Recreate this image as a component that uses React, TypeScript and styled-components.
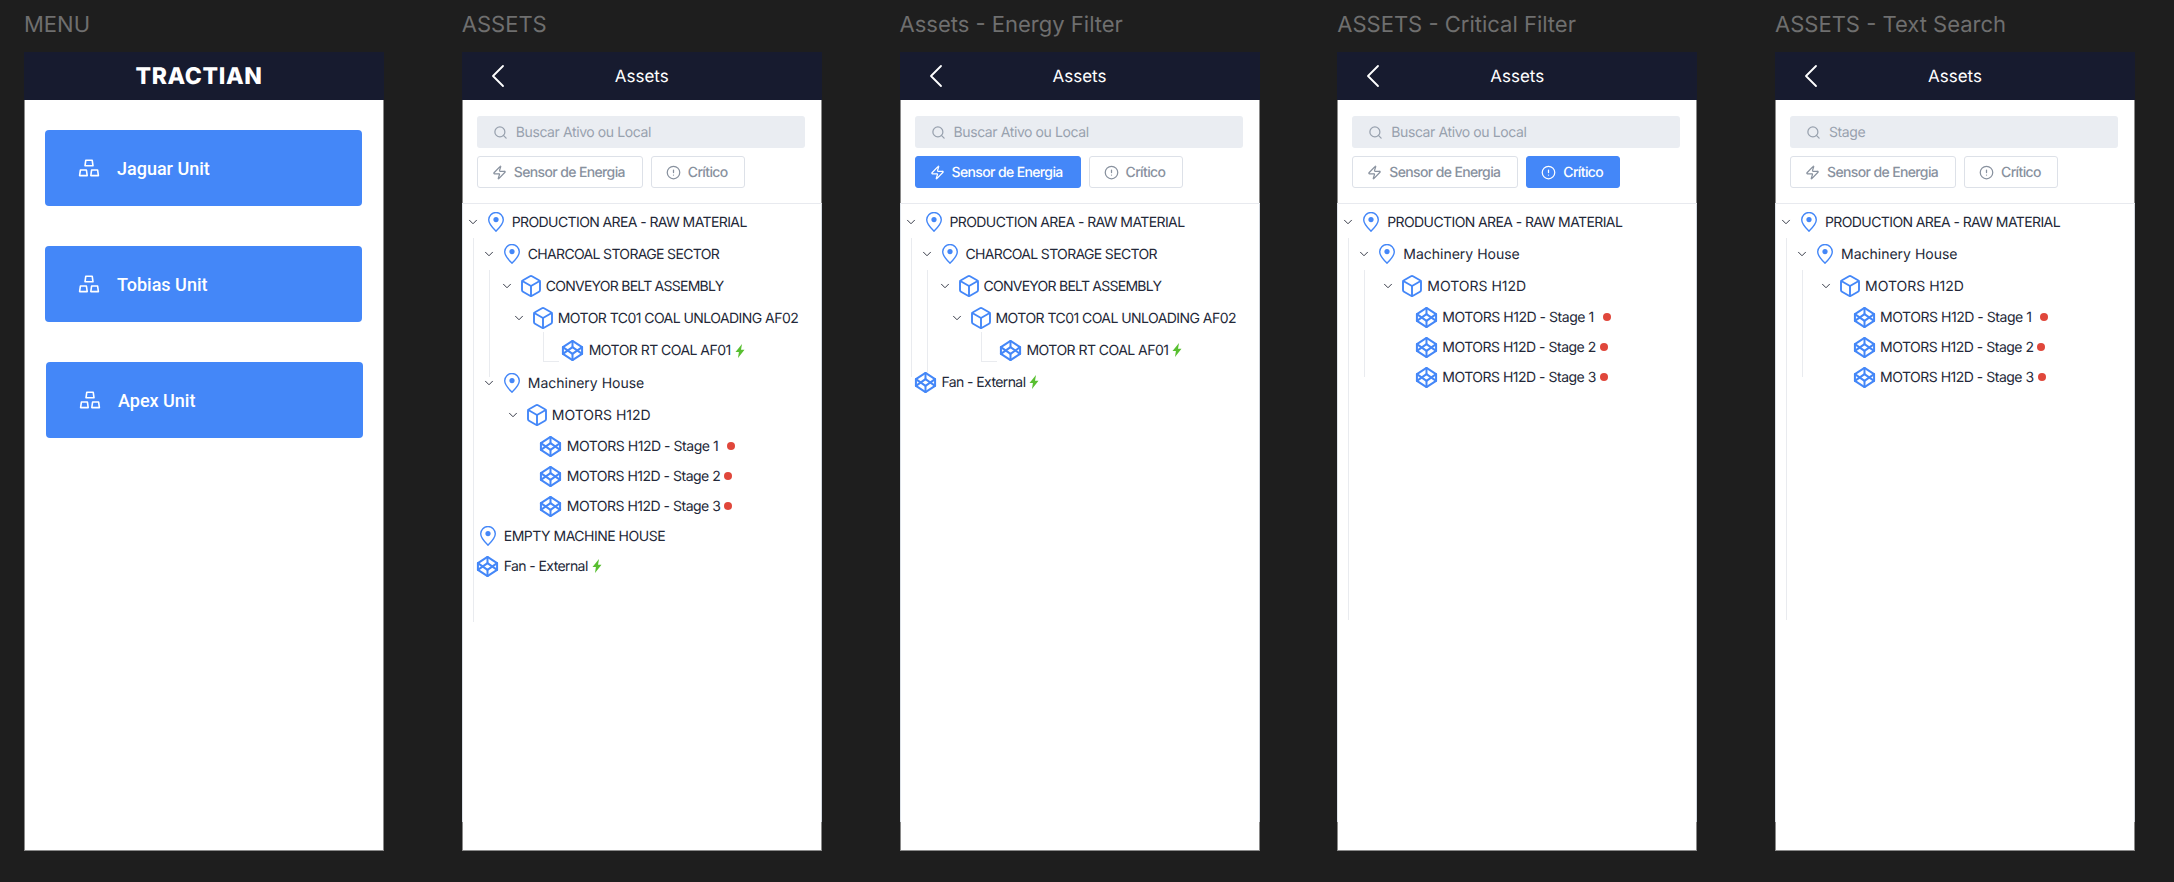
import styled, { createGlobalStyle } from 'styled-components';
import { Box, ChevronDown, ChevronLeft, CircleAlert, Codepen, Search, Zap } from 'lucide-react';

const GlobalStyle = createGlobalStyle`
    html,
    body {
        margin: 0;
        background: #1e1e1e;
        font-family: Inter, 'Liberation Sans', sans-serif;
        text-rendering: geometricPrecision;
    }
`;

const Page = styled.div`
    display: flex;
    gap: 77.75px;
    width: 2174px;
    height: 882px;
    padding: 11px 0 0 24px;
    box-sizing: border-box;
    overflow: hidden;
`;

const Column = styled.section`
    width: 360px;
`;

const Caption = styled.div`
    height: 41px;
    font-size: 22px;
    line-height: 28px;
    color: #6f6f6f;
    white-space: nowrap;
`;

const Phone = styled.div`
    display: flex;
    flex-direction: column;
    height: 799px;
    background: #fff;
    box-shadow: inset 0 0 0 1px #8a8a8a;
`;

const Header = styled.header`
    display: grid;
    grid-template-columns: 1fr auto 1fr;
    align-items: center;
    height: 48px;
    flex: none;
    background: #171b2f;
    color: #fff;
`;

const BackButton = styled.span`
    display: flex;
    padding-left: 16px;
`;

const Title = styled.span`
    padding-top: 1px;
    font-size: 17px;
`;

const Logo = styled.span`
    grid-column: 2;
    margin-left: -10px;
    font-size: 23px;
    font-weight: 800;
    letter-spacing: 0.6px;
    line-height: 48px;
`;

const UnitList = styled.div`
    display: flex;
    flex-direction: column;
    gap: 40px;
    padding: 30px 21px 0;
`;

const UnitButton = styled.button<{ $shift?: number }>`
    display: flex;
    align-items: center;
    gap: 17px;
    width: 317px;
    height: 76px;
    margin-left: ${p => p.$shift ?? 0}px;
    padding: 0 0 0 33px;
    border: 0;
    border-radius: 4px;
    background: #4487f8;
    color: #fff;
    font-family: Roboto, sans-serif;
    font-size: 18px;
    font-weight: 500;
`;

const Toolbar = styled.div`
    flex: none;
    height: 104px;
    padding: 16px 17px 0 15px;
    box-sizing: border-box;
    border-bottom: 1px solid #e8eaef;
`;

const SearchBox = styled.div`
    display: flex;
    align-items: center;
    gap: 8px;
    height: 32px;
    padding-left: 16px;
    border-radius: 3px;
    background: #eaedf2;
    color: #98a1ae;
    font-size: 14px;
    letter-spacing: -0.4px;
`;

const FilterRow = styled.div`
    display: flex;
    gap: 8px;
    margin-top: 8px;
`;

const FilterButton = styled.div<{ $active?: boolean; $width: number }>`
    display: flex;
    align-items: center;
    gap: 7px;
    width: ${p => p.$width}px;
    height: 32px;
    padding-left: 14px;
    box-sizing: border-box;
    border: 1px solid ${p => (p.$active ? '#4487f8' : '#dde1e8')};
    border-radius: 3px;
    background: ${p => (p.$active ? '#4487f8' : '#fff')};
    color: ${p => (p.$active ? '#fff' : '#88919e')};
    font-size: 14px;
    font-weight: 500;
    letter-spacing: -0.63px;
`;

const Tree = styled.div`
    position: relative;
    height: 618px;
    padding-top: 2px;
    box-sizing: border-box;
    box-shadow:
        inset 1px 0 #dde2e8,
        inset -1px 0 #d0d5dc;
`;

const Guide = styled.span<{ $left: number; $top: number; $height: number; $elbow?: boolean }>`
    position: absolute;
    left: ${p => p.$left}px;
    top: ${p => p.$top}px;
    height: ${p => p.$height}px;
    width: ${p => (p.$elbow ? 15 : 0)}px;
    border-left: 1px solid #e9ebef;
    border-bottom: ${p => (p.$elbow ? '1px solid #e9ebef' : 'none')};
`;

const Row = styled.div<{ $pad: number; $height: number }>`
    display: flex;
    align-items: center;
    height: ${p => p.$height}px;
    padding-left: ${p => p.$pad}px;
    font-size: 14px;
    color: #232838;
    white-space: nowrap;
`;

const Label = styled.span<{ $track: number }>`
    letter-spacing: ${p => p.$track}px;
`;

const Toggle = styled.span<{ $gap: number }>`
    display: flex;
    width: 14px;
    margin-right: ${p => p.$gap}px;
    color: #2a2e3c;
`;

const NodeIcon = styled.span<{ $width: number; $gap: number }>`
    display: flex;
    justify-content: center;
    width: ${p => p.$width}px;
    margin-right: ${p => p.$gap}px;
    color: #4487f8;

    svg {
        flex: none;
    }
`;

const Dot = styled.span<{ $gap: number }>`
    width: 8px;
    height: 8px;
    margin-left: ${p => p.$gap}px;
    border-radius: 50%;
    background: #e0473b;
`;

const BoltMark = styled.span`
    display: flex;
    margin-left: 4px;
    color: #58bf30;
`;

const PinIcon = () => (
    <svg width="16" height="20" viewBox="0 0 16 20" fill="none">
        <path
            d="M8 19.2C6 17.2.7 12.2.7 7.8a7.3 7.3 0 0 1 14.6 0C15.300 12.2 10 17.200 8 19.200Z"
            stroke="currentColor"
            strokeWidth="1.4"
            strokeLinejoin="round"
        />
        <circle cx="8" cy="7.6" r="2.6" fill="currentColor" />
    </svg>
);

const UnitIcon = () => (
    <svg width="22" height="18" viewBox="0 0 22 18" fill="none" stroke="currentColor" strokeWidth="1.6" strokeLinejoin="round">
        <path d="M7.800 1.200h6.400l.8 5.600H7Z" />
        <path d="M2.400 11h6l.8 5.600H1.600Z" />
        <path d="M13.600 11h6l.8 5.600h-7.600Z" />
    </svg>
);

const GreenBolt = () => (
    <svg width="10" height="14" viewBox="0 0 10 14" fill="currentColor">
        <path d="M7 0 .5 8h3.400L3 14l6.500-8.200H6Z" />
    </svg>
);

type Node = {
    label: string;
    kind: 'pin' | 'cube' | 'part';
    pad: number;
    track?: number;
    height?: number;
    open?: boolean;
    bolt?: boolean;
    dotGap?: number;
};

type Line = { left: number; top: number; height: number; elbow?: boolean };

const stages = (pad: number): Node[] => [
    { label: 'MOTORS H12D - Stage 1', kind: 'part', pad, track: -0.46, height: 30, dotGap: 9 },
    { label: 'MOTORS H12D - Stage 2', kind: 'part', pad, track: -0.5, height: 30, dotGap: 4 },
    { label: 'MOTORS H12D - Stage 3', kind: 'part', pad, track: -0.5, height: 30, dotGap: 4 },
];

const production: Node = { label: 'PRODUCTION AREA - RAW MATERIAL', kind: 'pin', pad: 4, track: -0.6, open: true };

const charcoal: Node[] = [
    production,
    { label: 'CHARCOAL STORAGE SECTOR', kind: 'pin', pad: 20, track: -0.66, open: true },
    { label: 'CONVEYOR BELT ASSEMBLY', kind: 'cube', pad: 38, track: -0.75, open: true },
    { label: 'MOTOR TC01 COAL UNLOADING AF02', kind: 'cube', pad: 50, track: -0.55, open: true },
];

const filtered: Node[] = [
    production,
    { label: 'Machinery House', kind: 'pin', pad: 20, open: true },
    { label: 'MOTORS H12D', kind: 'cube', pad: 44, open: true },
    ...stages(78),
];

const allNodes: Node[] = [
    ...charcoal,
    { label: 'MOTOR RT COAL AF01', kind: 'part', pad: 100, track: -0.54, height: 33, bolt: true },
    { label: 'Machinery House', kind: 'pin', pad: 20, open: true },
    { label: 'MOTORS H12D', kind: 'cube', pad: 44, open: true },
    ...stages(78),
    { label: 'EMPTY MACHINE HOUSE', kind: 'pin', pad: 18, track: -0.5, height: 30 },
    { label: 'Fan - External', kind: 'part', pad: 15, track: -0.6, height: 30, bolt: true },
];

const energyNodes: Node[] = [
    ...charcoal,
    { label: 'MOTOR RT COAL AF01', kind: 'part', pad: 100, track: -0.54, bolt: true },
    { label: 'Fan - External', kind: 'part', pad: 15, track: -0.6, bolt: true },
];

const filteredLines: Line[] = [
    { left: 11, top: 34, height: 382 },
    { left: 27, top: 66, height: 107 },
];

const TreeRow = ({ node }: { node: Node }) => (
    <Row $pad={node.pad} $height={node.height ?? 32}>
        {node.open && (
            <Toggle $gap={node.kind === 'pin' ? 8 : 6}>
                <ChevronDown size={14} strokeWidth={1.6} />
            </Toggle>
        )}
        {node.kind === 'pin' && (
            <NodeIcon $width={16} $gap={8}>
                <PinIcon />
            </NodeIcon>
        )}
        {node.kind === 'cube' && (
            <NodeIcon $width={22} $gap={4}>
                <Box size={24} strokeWidth={1.9} />
            </NodeIcon>
        )}
        {node.kind === 'part' && (
            <NodeIcon $width={22} $gap={5}>
                <Codepen size={23} strokeWidth={2.1} />
            </NodeIcon>
        )}
        <Label $track={node.track ?? 0}>{node.label}</Label>
        {node.bolt && (
            <BoltMark>
                <GreenBolt />
            </BoltMark>
        )}
        {node.dotGap !== undefined && <Dot $gap={node.dotGap} />}
    </Row>
);

const AssetsScreen = ({
    search,
    active,
    nodes,
    lines,
}: {
    search: string;
    active?: 'energy' | 'critical';
    nodes: Node[];
    lines: Line[];
}) => (
    <Phone>
        <Header>
            <BackButton>
                <ChevronLeft size={40} strokeWidth={1.1} />
            </BackButton>
            <Title>Assets</Title>
        </Header>
        <Toolbar>
            <SearchBox>
                <Search size={15} />
                {search}
            </SearchBox>
            <FilterRow>
                <FilterButton $width={166} $active={active === 'energy'}>
                    <Zap size={15} />
                    Sensor de Energia
                </FilterButton>
                <FilterButton $width={94} $active={active === 'critical'}>
                    <CircleAlert size={15} />
                    Crítico
                </FilterButton>
            </FilterRow>
        </Toolbar>
        <Tree>
            {lines.map(line => (
                <Guide key={line.left} $left={line.left} $top={line.top} $height={line.height} $elbow={line.elbow} />
            ))}
            {nodes.map((node, i) => (
                <TreeRow key={i} node={node} />
            ))}
        </Tree>
    </Phone>
);

const App = () => {
    return (
        <Page>
            <GlobalStyle />
            <Column>
                <Caption>MENU</Caption>
                <Phone>
                    <Header>
                        <Logo>TRACTIAN</Logo>
                    </Header>
                    <UnitList>
                        <UnitButton>
                            <UnitIcon />
                            Jaguar Unit
                        </UnitButton>
                        <UnitButton>
                            <UnitIcon />
                            Tobias Unit
                        </UnitButton>
                        <UnitButton $shift={1}>
                            <UnitIcon />
                            Apex Unit
                        </UnitButton>
                    </UnitList>
                </Phone>
            </Column>
            <Column>
                <Caption>ASSETS</Caption>
                <AssetsScreen
                    search="Buscar Ativo ou Local"
                    nodes={allNodes}
                    lines={[
                        { left: 11, top: 34, height: 384 },
                        { left: 27, top: 66, height: 107 },
                        { left: 81, top: 128, height: 29, elbow: true },
                    ]}
                />
            </Column>
            <Column>
                <Caption>Assets - Energy Filter</Caption>
                <AssetsScreen
                    search="Buscar Ativo ou Local"
                    active="energy"
                    nodes={energyNodes}
                    lines={[
                        { left: 11, top: 34, height: 139 },
                        { left: 27, top: 66, height: 103 },
                        { left: 81, top: 128, height: 29, elbow: true },
                    ]}
                />
            </Column>
            <Column>
                <Caption>ASSETS - Critical Filter</Caption>
                <AssetsScreen search="Buscar Ativo ou Local" active="critical" nodes={filtered} lines={filteredLines} />
            </Column>
            <Column>
                <Caption>ASSETS - Text Search</Caption>
                <AssetsScreen search="Stage" nodes={filtered} lines={filteredLines} />
            </Column>
        </Page>
    );
};

export default App;
